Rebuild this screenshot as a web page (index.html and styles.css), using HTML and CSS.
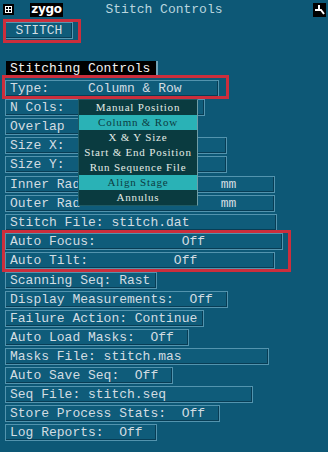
FILE: index.html
```html
<!DOCTYPE html>
<html lang="en">
<head>
    <meta charset="UTF-8">
    <meta name="viewport" content="width=device-width, initial-scale=1.0">
    <title>Stitch Controls</title>
    <link rel="stylesheet" href="styles.css">
</head>
<body>

<div class="window">
    <div class="titlebar">
        <div class="tb-left">
            <span class="sys-icon">
                <svg width="11" height="11" viewBox="0 0 11 11">
                    <rect x="2.5" y="2.5" width="6" height="6" fill="none" stroke="#fff" stroke-width="1"/>
                    <path d="M5.5 2.5 V8.5 M2.5 5.5 H8.5" stroke="#fff" stroke-width="1"/>
                </svg>
            </span>
            <span class="logo">zygo</span>
        </div>
        <div class="tb-title">Stitch Controls</div>
        <div class="tb-right">
            <span class="pin-icon">
                <svg width="13" height="14" viewBox="0 0 13 14">
                    <path d="M6 2 V8 M2 7 H8 L11 11" fill="none" stroke="#fff" stroke-width="2"/>
                </svg>
            </span>
        </div>
    </div>

    <div class="content">
        <div class="btn">STITCH</div>
        <div class="section-label">Stitching Controls</div>

        <div class="fields">
            <div class="field w-type">Type:     Column &amp; Row</div>
            <div class="field w-ncols">N Cols:</div>
            <div class="field w-overlap">Overlap</div>
            <div class="field w-size">Size X:</div>
            <div class="field w-size">Size Y:</div>
            <div class="field w-radius gap-top">Inner Rad                  mm</div>
            <div class="field w-radius">Outer Rad                  mm</div>
            <div class="field w-stitch">Stitch File: stitch.dat</div>
            <div class="field w-focus">Auto Focus:           Off</div>
            <div class="field w-tilt">Auto Tilt:           Off</div>
            <div class="field gap-top">Scanning Seq: Rast</div>
            <div class="field">Display Measurements:  Off </div>
            <div class="field">Failure Action: Continue</div>
            <div class="field">Auto Load Masks:  Off </div>
            <div class="field w-masks">Masks File: stitch.mas</div>
            <div class="field">Auto Save Seq:  Off </div>
            <div class="field w-seq">Seq File: stitch.seq</div>
            <div class="field">Store Process Stats:  Off </div>
            <div class="field">Log Reports:  Off </div>
        </div>
    </div>

    <!-- option menu popped open over the fields -->
    <div class="menu">
        <div class="menu-item">Manual Position</div>
        <div class="menu-item selected">Column &amp; Row</div>
        <div class="menu-item">X &amp; Y Size</div>
        <div class="menu-item">Start &amp; End Position</div>
        <div class="menu-item">Run Sequence File</div>
        <div class="menu-item selected">Align Stage</div>
        <div class="menu-item">Annulus</div>
    </div>

    <!-- red highlight marks -->
    <div class="mark mark-stitch"></div>
    <div class="mark mark-type"></div>
    <div class="mark mark-auto"></div>
</div>

</body>
</html>
```

FILE: styles.css
```css
html, body {
    margin: 0;
    padding: 0;
}

body {
    background-color: #0d5876;
    font-family: "Liberation Mono", "Courier New", monospace;
    font-size: 13px;
    color: #d3dde2;
}

.window {
    position: relative;
    width: 328px;
    height: 452px;
    overflow: hidden;
}

/* title bar */
.titlebar {
    display: grid;
    grid-template-columns: 1fr auto 1fr;
    align-items: center;
    height: 19px;
}

.tb-left {
    display: flex;
    align-items: center;
    gap: 16px;
    padding-left: 3px;
}

.sys-icon {
    display: flex;
    width: 11px;
    height: 11px;
    background-color: #000;
}

.logo {
    display: block;
    width: 33px;
    height: 14px;
    line-height: 13px;
    background-color: #000;
    color: #fff;
    font-family: "DejaVu Sans", sans-serif;
    font-weight: bold;
    font-size: 12px;
    letter-spacing: -0.3px;
    text-align: center;
}

.tb-title {
    color: #b9d5de;
    white-space: pre;
}

.tb-right {
    display: flex;
    justify-content: flex-end;
    padding-right: 2px;
}

.pin-icon {
    display: flex;
    width: 13px;
    height: 14px;
    background-color: #000;
}

/* content */
.content {
    padding-left: 5px;
}

.btn {
    width: 68px;
    height: 17px;
    box-sizing: border-box;
    margin-top: 3px;
    line-height: 15px;
    text-align: center;
    border: 1px solid #5796b0;
    box-shadow: inset -1px -1px 0 #083d55;
    background-color: #0f5c7a;
}

.section-label {
    width: 152px;
    height: 16px;
    box-sizing: border-box;
    margin-top: 22px;
    margin-left: 1px;
    padding-left: 4px;
    line-height: 15px;
    background-color: #000;
    color: #f2f2f2;
    border-right: 2px solid #6fa4b9;
}

.fields {
    display: flex;
    flex-direction: column;
    align-items: flex-start;
    gap: 2px;
    margin-top: 3px;
}

.field {
    height: 17px;
    box-sizing: border-box;
    padding: 0 6px 0 4px;
    line-height: 15px;
    white-space: pre;
    border: 1px solid #5394ae;
    box-shadow: inset -1px -1px 0 #083d55;
    background-color: #0f5c7a;
}

.gap-top { margin-top: 1px; }

.w-type { width: 214px; }
.w-ncols { width: 200px; }
.w-overlap { width: 182px; }
.w-size { width: 222px; }
.w-radius { width: 270px; }
.w-stitch { width: 272px; }
.w-focus { width: 278px; }
.w-tilt { width: 270px; }
.w-masks { width: 264px; }
.w-seq { width: 248px; }

/* popup menu */
.menu {
    position: absolute;
    left: 78px;
    top: 99px;
    width: 120px;
    box-sizing: border-box;
    background-color: #0a3b40;
    border: 1px solid #1d5a64;
    border-right-color: #6f9da6;
}

.menu-item {
    height: 15px;
    line-height: 15px;
    text-align: center;
    font-family: "Liberation Serif", "Times New Roman", serif;
    font-size: 11px;
    letter-spacing: 0.8px;
    color: #e3ebe6;
    white-space: nowrap;
}

.menu-item.selected {
    background-color: #2ab2b6;
    color: #0c3d42;
}

/* red annotation boxes */
.mark {
    position: absolute;
    border: 3px solid #cc2e3c;
    box-sizing: border-box;
}

.mark-stitch {
    left: 3px;
    top: 19px;
    width: 78px;
    height: 24px;
}

.mark-type {
    left: 2px;
    top: 75px;
    width: 227px;
    height: 24px;
}

.mark-auto {
    left: 2px;
    top: 230px;
    width: 289px;
    height: 42px;
}
```
